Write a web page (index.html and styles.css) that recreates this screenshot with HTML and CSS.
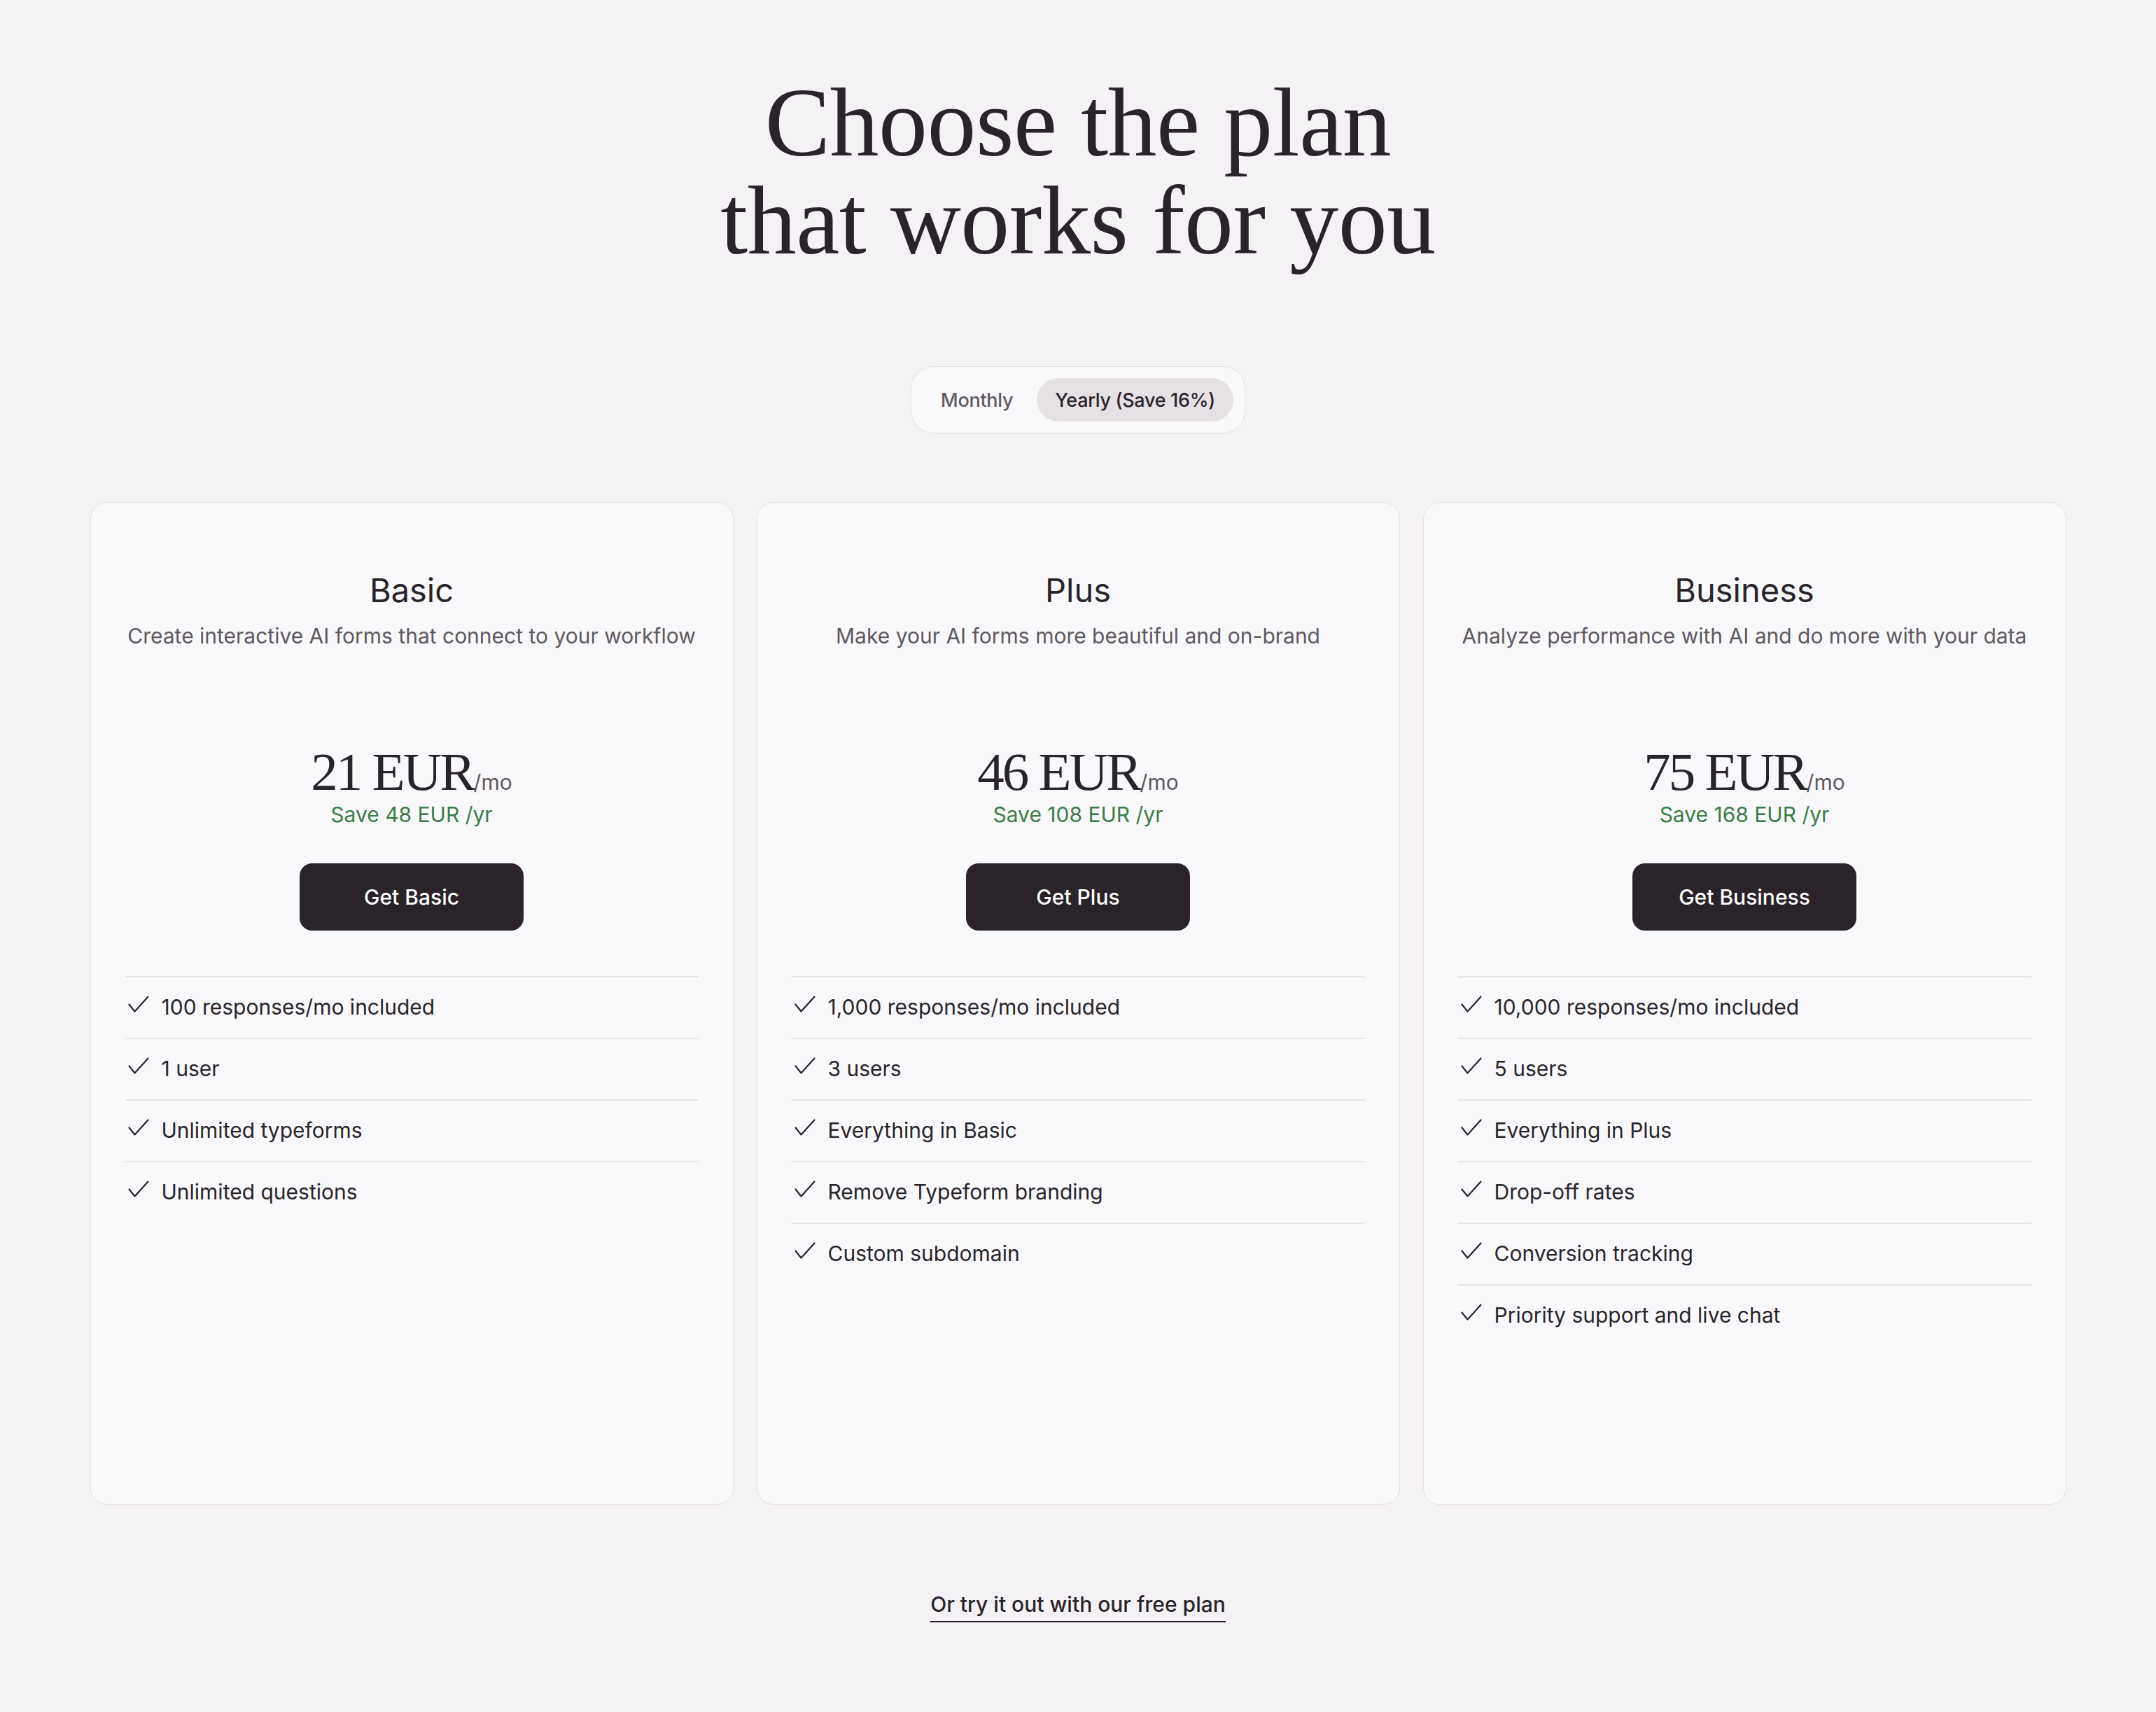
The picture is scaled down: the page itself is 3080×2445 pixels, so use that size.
FILE: index.html
```html
<!DOCTYPE html>
<html lang="en">
<head>
<meta charset="utf-8">
<title>Choose the plan that works for you</title>
<link rel="stylesheet" href="styles.css">
</head>
<body>
<main class="page">
  <h1 class="headline">Choose the plan<br>that works for you</h1>

  <div class="toggle">
    <button class="toggle-btn">Monthly</button>
    <button class="toggle-btn is-active">Yearly (Save 16%)</button>
  </div>

  <section class="plans">
    <article class="card">
      <h2 class="card-title">Basic</h2>
      <p class="card-desc">Create interactive AI forms that connect to your workflow</p>
      <div class="price">21 EUR<span class="per">/mo</span></div>
      <p class="save">Save 48 EUR /yr</p>
      <a class="cta" href="#">Get Basic</a>
      <ul class="features">
        <li><svg class="check" viewBox="0 0 34 25" width="34" height="25"><path d="M5.5 12.5 L13.5 22.5 L32.5 1.5"/></svg><span>100 responses/mo included</span></li>
        <li><svg class="check" viewBox="0 0 34 25" width="34" height="25"><path d="M5.5 12.5 L13.5 22.5 L32.5 1.5"/></svg><span>1 user</span></li>
        <li><svg class="check" viewBox="0 0 34 25" width="34" height="25"><path d="M5.5 12.5 L13.5 22.5 L32.5 1.5"/></svg><span>Unlimited typeforms</span></li>
        <li><svg class="check" viewBox="0 0 34 25" width="34" height="25"><path d="M5.5 12.5 L13.5 22.5 L32.5 1.5"/></svg><span>Unlimited questions</span></li>
      </ul>
    </article>

    <article class="card">
      <h2 class="card-title">Plus</h2>
      <p class="card-desc">Make your AI forms more beautiful and on-brand</p>
      <div class="price">46 EUR<span class="per">/mo</span></div>
      <p class="save">Save 108 EUR /yr</p>
      <a class="cta" href="#">Get Plus</a>
      <ul class="features">
        <li><svg class="check" viewBox="0 0 34 25" width="34" height="25"><path d="M5.5 12.5 L13.5 22.5 L32.5 1.5"/></svg><span>1,000 responses/mo included</span></li>
        <li><svg class="check" viewBox="0 0 34 25" width="34" height="25"><path d="M5.5 12.5 L13.5 22.5 L32.5 1.5"/></svg><span>3 users</span></li>
        <li><svg class="check" viewBox="0 0 34 25" width="34" height="25"><path d="M5.5 12.5 L13.5 22.5 L32.5 1.5"/></svg><span>Everything in Basic</span></li>
        <li><svg class="check" viewBox="0 0 34 25" width="34" height="25"><path d="M5.5 12.5 L13.5 22.5 L32.5 1.5"/></svg><span>Remove Typeform branding</span></li>
        <li><svg class="check" viewBox="0 0 34 25" width="34" height="25"><path d="M5.5 12.5 L13.5 22.5 L32.5 1.5"/></svg><span>Custom subdomain</span></li>
      </ul>
    </article>

    <article class="card">
      <h2 class="card-title">Business</h2>
      <p class="card-desc">Analyze performance with AI and do more with your data</p>
      <div class="price">75 EUR<span class="per">/mo</span></div>
      <p class="save">Save 168 EUR /yr</p>
      <a class="cta" href="#">Get Business</a>
      <ul class="features">
        <li><svg class="check" viewBox="0 0 34 25" width="34" height="25"><path d="M5.5 12.5 L13.5 22.5 L32.5 1.5"/></svg><span>10,000 responses/mo included</span></li>
        <li><svg class="check" viewBox="0 0 34 25" width="34" height="25"><path d="M5.5 12.5 L13.5 22.5 L32.5 1.5"/></svg><span>5 users</span></li>
        <li><svg class="check" viewBox="0 0 34 25" width="34" height="25"><path d="M5.5 12.5 L13.5 22.5 L32.5 1.5"/></svg><span>Everything in Plus</span></li>
        <li><svg class="check" viewBox="0 0 34 25" width="34" height="25"><path d="M5.5 12.5 L13.5 22.5 L32.5 1.5"/></svg><span>Drop-off rates</span></li>
        <li><svg class="check" viewBox="0 0 34 25" width="34" height="25"><path d="M5.5 12.5 L13.5 22.5 L32.5 1.5"/></svg><span>Conversion tracking</span></li>
        <li><svg class="check" viewBox="0 0 34 25" width="34" height="25"><path d="M5.5 12.5 L13.5 22.5 L32.5 1.5"/></svg><span>Priority support and live chat</span></li>
      </ul>
    </article>
  </section>

  <div class="footer-link-wrap">
    <a class="free-link" href="#">Or try it out with our free plan</a>
  </div>
</main>
</body>
</html>
```

FILE: styles.css
```css
* { box-sizing: border-box; }

html, body {
  margin: 0;
  padding: 0;
  background: #f4f2f5;
  color: #29242a;
  font-family: "Inter", "Liberation Sans", sans-serif;
}

.page {
  display: flex;
  flex-direction: column;
  align-items: center;
  padding: 105px 0 128px;
}

.headline {
  margin: 0;
  font-family: "Liberation Serif", serif;
  font-weight: 400;
  font-size: 140px;
  line-height: 140px;
  letter-spacing: -0.5px;
  text-align: center;
  color: #29242a;
}

.toggle {
  margin-top: 138px;
  display: flex;
  gap: 8px;
  padding: 16px;
  border: 1px solid #e3dfe3;
  border-radius: 32px;
  background: #f9f9fb;
}

.toggle-btn {
  height: 62px;
  padding: 0 26px;
  border: 0;
  border-radius: 31px;
  background: transparent;
  font-family: "Inter", "Liberation Sans", sans-serif;
  font-size: 27px;
  letter-spacing: -0.3px;
  font-weight: 500;
  color: #5e5860;
}

.toggle-btn.is-active {
  background: #e5e1e5;
  color: #29242a;
}

.plans {
  margin-top: 98px;
  width: 2823px;
  display: grid;
  grid-template-columns: repeat(3, 1fr);
  gap: 33px;
}

.card {
  min-height: 1432px;
  padding: 97px 49px 48px;
  border: 1px solid #e3dfe3;
  border-radius: 24px;
  background: #f9f9fb;
  display: flex;
  flex-direction: column;
  align-items: center;
}

.card-title {
  margin: 0;
  font-size: 47px;
  line-height: 56px;
  font-weight: 400;
  color: #29242a;
}

.card-desc {
  margin: 17px 0 0;
  font-size: 30px;
  line-height: 40px;
  color: #5e5860;
  text-align: center;
}

.price {
  margin-top: 136px;
  font-family: "Liberation Serif", serif;
  font-size: 77px;
  line-height: 76px;
  letter-spacing: -3px;
  color: #29242a;
}

.per {
  font-family: "Inter", "Liberation Sans", sans-serif;
  font-size: 30px;
  line-height: 1;
  letter-spacing: 0;
  color: #5e5860;
}

.save {
  margin: 3px 0 0;
  font-size: 30px;
  line-height: 40px;
  color: #3b7c46;
}

.cta {
  margin-top: 50px;
  width: 320px;
  height: 96px;
  display: flex;
  align-items: center;
  justify-content: center;
  border-radius: 18px;
  background: #2a2329;
  color: #ffffff;
  font-size: 30px;
  font-weight: 500;
  text-decoration: none;
}

.features {
  align-self: stretch;
  margin: 65px 0 0;
  padding: 0;
  list-style: none;
}

.features li {
  display: flex;
  align-items: flex-start;
  gap: 18px;
  padding: 21px 0 23px;
  border-top: 2px solid #e6e2e6;
  font-size: 30px;
  line-height: 42px;
  color: #29242a;
}

.check {
  flex: none;
  margin-top: 5px;
  fill: none;
  stroke: #29242a;
  stroke-width: 2.2;
  stroke-linecap: round;
  stroke-linejoin: round;
}

.footer-link-wrap {
  margin-top: 122px;
}

.free-link {
  display: inline-block;
  font-size: 30px;
  line-height: 40px;
  font-weight: 500;
  color: #29242a;
  text-decoration: none;
  padding-bottom: 4px;
  border-bottom: 2px solid #29242a;
}
```
